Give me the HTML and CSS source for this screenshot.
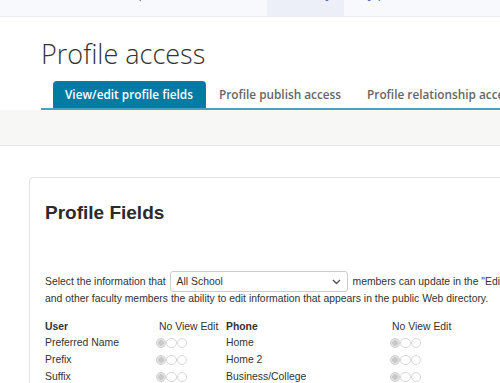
FILE: index.html
```html
<!DOCTYPE html>
<html lang="en">
<head>
  <meta charset="UTF-8" />
  <title>Profile access</title>
  <link rel="stylesheet" href="styles.css">
</head>
<body>
  <div class="topbar">
    <div class="nav-item nav-first"><span>Groups</span></div>
    <div class="nav-item nav-active"><span>Academy</span></div>
    <div class="nav-item nav-third"><span>My profile</span></div>
    <div class="nav-item nav-last"><span>Settings</span></div>
  </div>

  <div class="page-header">
    <h1>Profile access</h1>
    <div class="tabs">
      <div class="tab active">View/edit profile fields</div>
      <div class="tab">Profile publish access</div>
      <div class="tab">Profile relationship access</div>
    </div>
  </div>

  <div class="toolbar"></div>

  <div class="card">
    <h2>Profile Fields</h2>

    <p class="intro">
      Select the information that
      <span class="select-box">
        <span>All School</span>
        <svg width="9" height="6" viewBox="0 0 9 6"><path d="M1 1l3.5 3.5L8 1" fill="none" stroke="#555" stroke-width="1.4"/></svg>
      </span>
      members can update in the "Edit Profile" page. This gives students, parents<br>
      and other faculty members the ability to edit information that appears in the public Web directory.
    </p>

    <div class="fields">
      <div class="field-group group-user">
        <div class="group-title">User</div>
        <div class="col-head">No View Edit</div>

        <div class="field-name">Preferred Name</div>
        <div class="radios"><i class="on"></i><i></i><i></i></div>
        <div class="field-name">Prefix</div>
        <div class="radios"><i class="on"></i><i></i><i></i></div>
        <div class="field-name">Suffix</div>
        <div class="radios"><i class="on"></i><i></i><i></i></div>
      </div>

      <div class="field-group group-phone">
        <div class="group-title">Phone</div>
        <div class="col-head">No View Edit</div>

        <div class="field-name">Home</div>
        <div class="radios"><i class="on"></i><i></i><i></i></div>
        <div class="field-name">Home 2</div>
        <div class="radios"><i class="on"></i><i></i><i></i></div>
        <div class="field-name">Business/College</div>
        <div class="radios"><i class="on"></i><i></i><i></i></div>
      </div>
    </div>
  </div>
</body>
</html>
```

FILE: styles.css
```css
html, body {
  height: 100%;
  overflow: hidden;
}

body {
  margin: 0;
  font-family: 'Liberation Sans', Arial, sans-serif;
  color: #333;
  background-color: #fff;
}

/* top navigation, scrolled mostly out of view */
.topbar {
  display: flex;
  height: 16px;
  background-color: #f8f9fc;
  border-bottom: 1px solid #eceef4;
  overflow: hidden;
  font-family: 'Open Sans', sans-serif;
  font-size: 13px;
  color: #4c5cc0;
  white-space: nowrap;
}

.nav-item {
  flex-shrink: 0;
  box-sizing: border-box;
  height: 16px;
  padding: 0 12px;
}

.nav-item span {
  display: block;
  line-height: 20px;
  margin-top: -17px;
}

.nav-first {
  margin-left: 96px;
  width: 171px;
}

.nav-active {
  width: 77px;
  padding-left: 0;
  padding-right: 0;
  text-align: right;
  background-color: #eceff8;
}

.nav-active span {
  padding-right: 12px;
}

.nav-third {
  width: 120px;
}

.nav-last {
  padding-left: 24px;
}

.page-header {
  padding-left: 41px;
}

.page-header h1 {
  margin: 19px 0 9px;
  font-family: 'Open Sans', sans-serif;
  font-size: 27px;
  font-weight: 300;
  line-height: 36px;
  color: #333;
}

.tabs {
  display: flex;
  padding-left: 12px;
  border-bottom: 2px solid #45a2c6;
  white-space: nowrap;
}

.tab {
  padding: 0 13px;
  line-height: 27px;
  font-family: 'Open Sans', sans-serif;
  font-size: 11.8px;
  font-weight: 600;
  color: #666;
}

.tab.active {
  padding: 0 13px 0 12px;
  background-color: #007ba4;
  color: #fff;
  border-radius: 4px 4px 0 0;
}

.toolbar {
  height: 35px;
  background-color: #f7f7f6;
  border-bottom: 1px solid #e8e8e8;
}

.card {
  width: 720px;
  height: 400px;
  margin: 31px 0 0 29px;
  padding: 24px 15px 0;
  border: 1px solid #e3e3e3;
  border-radius: 4px;
}

.card h2 {
  margin: 0;
  font-size: 19px;
  line-height: 22px;
  font-weight: 700;
  color: #2b2b2b;
}

.intro {
  margin: 49px 0 0;
  font-size: 10.4px;
  line-height: 17px;
  white-space: nowrap;
}

.select-box {
  display: inline-flex;
  align-items: center;
  justify-content: space-between;
  box-sizing: border-box;
  width: 178px;
  height: 21px;
  margin: -3px 2px -2px 1px;
  padding: 0 6px;
  vertical-align: middle;
  border: 1px solid #ccc;
  border-radius: 3px;
  font-size: 10.4px;
}

.fields {
  display: flex;
  margin-top: 12px;
  font-size: 10.4px;
}

.field-group {
  display: grid;
  grid-template-rows: 15px;
  grid-auto-rows: 17px;
  align-items: center;
}

.group-user {
  grid-template-columns: 111px 70px;
}

.group-phone {
  grid-template-columns: 164px 70px;
}

.group-title {
  font-weight: 700;
}

.col-head {
  padding-left: 3px;
}

.group-phone .col-head {
  padding-left: 2px;
}

.radios {
  display: flex;
}

.radios i {
  box-sizing: border-box;
  width: 10.4px;
  height: 10.4px;
  border: 1px solid #d8d8d8;
  border-radius: 50%;
  background-color: #fff;
}

.radios i.on {
  border-color: #d0d0d0;
  background: radial-gradient(circle, #c9c9c9 0 2.6px, #e4e4e4 3px);
}
```
